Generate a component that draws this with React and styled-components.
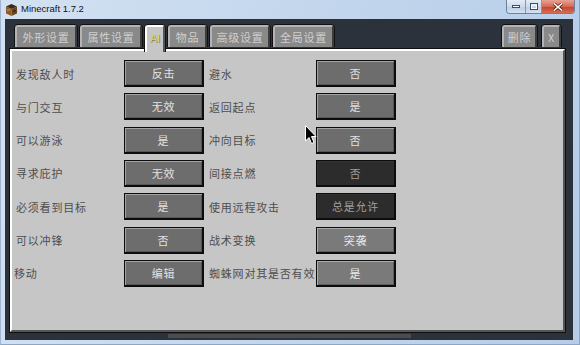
import React from "react";
import styled, { createGlobalStyle, css } from "styled-components";

const GlobalStyle = createGlobalStyle`
  html, body { margin: 0; padding: 0; background: #bcd0e8; }
  body { width: 580px; height: 345px; overflow: hidden; }
  * { box-sizing: border-box; }
`;

const CJK = `"Noto Sans CJK SC", "Noto Sans", sans-serif`;

const Window = styled.div`
  position: relative;
  width: 580px;
  height: 345px;
  display: flex;
  flex-direction: column;
  background: linear-gradient(100deg, #d3e2f2 0%, #c4d7ed 45%, #b6cde8 100%);
  border-left: 1px solid #9fb5cf;
  border-right: 1px solid #8ea6c4;
  border-bottom: 1px solid #8ea6c4;
`;

const TitleBar = styled.div`
  height: 19px;
  display: flex;
  align-items: flex-start;
  flex-shrink: 0;
`;

const AppIcon = styled.svg`
  width: 11px;
  height: 12px;
  margin: 4px 0 0 5px;
`;

const Title = styled.span`
  margin: 3px 0 0 4px;
  font-family: "Liberation Sans", Arial, sans-serif;
  font-size: 9.5px;
  line-height: 12px;
  color: #111;
`;

const Controls = styled.div`
  margin-left: auto;
  margin-right: 4px;
  display: flex;
  height: 14px;
  border: 1px solid #6f829b;
  border-top: none;
  border-radius: 0 0 4px 4px;
  overflow: hidden;
`;

const CtrlButton = styled.div`
  width: ${(p) => p.$w}px;
  height: 100%;
  display: flex;
  align-items: center;
  justify-content: center;
  border-left: 1px solid #8296af;
  background: linear-gradient(#e4edf7, #cbdaec 50%, #bccee5 51%, #d2e0f1);
  &:first-child { border-left: none; }
  ${(p) =>
    p.$close &&
    css`
      background: linear-gradient(#e9a393, #d36a55 50%, #c2442c 51%, #d96a4f);
    `}
`;

const Client = styled.div`
  position: relative;
  flex: 1;
  margin: 0 6px 4px 4px;
  background: #2c323c;
  display: flex;
  flex-direction: column;
`;

const TabBar = styled.div`
  height: 30px;
  padding: 6px 12px 0 10px;
  display: flex;
  align-items: flex-end;
  gap: 3px;
  flex-shrink: 0;
`;

const Tab = styled.div`
  width: ${(p) => p.$w}px;
  height: 22px;
  margin-bottom: 2px;
  margin-left: ${(p) => p.$gap || 0}px;
  display: flex;
  align-items: center;
  justify-content: center;
  font-family: ${CJK};
  font-size: 11px;
  letter-spacing: 0.8px;
  color: #cfcfcf;
  background: #898989;
  border-top: 2px solid #b4b4b4;
  border-left: 2px solid #b4b4b4;
  border-right: 2px solid #3d3d3d;
  border-radius: 3px 3px 0 0;
  box-shadow: 1px 0 0 #111, -1px 0 0 #111, 0 -1px 0 #111;
  white-space: nowrap;
  ${(p) =>
    p.$active &&
    css`
      position: relative;
      z-index: 2;
      height: 27px;
      margin-bottom: -3px;
      padding-bottom: 2px;
      background: #c6c6c6;
      border-top-color: #fff;
      border-left-color: #fff;
      border-right-color: #555;
      color: #d6d26a;
      letter-spacing: 0;
      font-family: "DejaVu Sans", sans-serif;
      font-size: 10px;
      text-shadow: 1px 1px 0 #8c8a5a;
    `}
`;

const Spacer = styled.div`
  flex: 1;
`;

const Panel = styled.div`
  flex: 1;
  margin: 0 8px 0 5px;
  background: #c6c6c6;
  border-top: 2px solid #fff;
  border-left: 2px solid #fff;
  border-right: 2px solid #555;
  border-bottom: 2px solid #555;
  box-shadow: 0 0 0 1px #101010;
  padding: 9px 0 0 4px;
`;

const Grid = styled.div`
  display: grid;
  grid-template-columns: 108px 80px 112px 80px;
  grid-auto-rows: 27px;
  row-gap: 6.33px;
`;

const Label = styled.div`
  display: flex;
  align-items: center;
  padding-left: ${(p) => p.$indent || 0}px;
  margin-left: ${(p) => p.$pull || 0}px;
  font-family: ${CJK};
  font-size: 11px;
  letter-spacing: 0.8px;
  color: #4e4e4e;
  white-space: nowrap;
`;

const variants = {
  normal: css`
    background: #6d6d6d;
    color: #e2e2e2;
    box-shadow: inset 1px 1px 0 #a2a2a2, inset -1px -1px 0 #565656;
  `,
  light: css`
    background: #7a7a7a;
    color: #ececec;
    box-shadow: inset 1px 1px 0 #acacac, inset -1px -1px 0 #5e5e5e;
  `,
  dark: css`
    background: #2c2c2c;
    color: #a0a0a0;
    box-shadow: inset 1px 1px 0 #333;
  `,
};

const Button = styled.div`
  display: flex;
  align-items: center;
  justify-content: center;
  font-family: ${CJK};
  font-size: 11px;
  letter-spacing: 0.8px;
  border: 1px solid #0c0c0c;
  border-right-width: 2px;
  border-bottom-width: 2px;
  ${(p) => variants[p.$variant || "normal"]}
`;

const Hotbar = styled.div`
  height: 4px;
  width: 243px;
  margin: 2px 0 2px 163px;
  background: #4a4c50;
  flex-shrink: 0;
`;

const Cursor = styled.svg`
  position: absolute;
  left: 304px;
  top: 125px;
  width: 12px;
  height: 20px;
  z-index: 5;
`;

const rows = [
  ["发现敌人时", "反击", "避水", "否"],
  ["与门交互", "无效", "返回起点", "是"],
  ["可以游泳", "是", "冲向目标", "否"],
  ["寻求庇护", "无效", "间接点燃", "否", "dark"],
  ["必须看到目标", "是", "使用远程攻击", "总是允许", "dark"],
  ["可以冲锋", "否", "战术变换", "突袭", "light"],
  ["移动", "编辑", "蜘蛛网对其是否有效", "是", "light"],
];

const leftTabs = [
  ["外形设置", 62],
  ["属性设置", 62],
  ["AI", 20, true],
  ["物品", 39],
  ["高级设置", 60],
  ["全局设置", 61],
];

export default function App() {
  return (
    <>
      <GlobalStyle />
      <Window>
        <TitleBar>
          <AppIcon viewBox="0 0 11 12">
            <polygon points="5.5,0 11,2.5 5.5,5 0,2.5" fill="#3b2a18" />
            <polygon points="0,2.5 5.5,5 5.5,12 0,9.5" fill="#8a5a2c" />
            <polygon points="5.5,5 11,2.5 11,9.5 5.5,12" fill="#6b4420" />
            <rect x="1" y="5" width="3" height="2" fill="#b07a40" />
            <rect x="7" y="6" width="3" height="2" fill="#4e3016" />
          </AppIcon>
          <Title>Minecraft 1.7.2</Title>
          <Controls>
            <CtrlButton $w={18}>
              <svg width="8" height="3" viewBox="0 0 8 3">
                <rect x="0.5" y="0.5" width="7" height="2" fill="#fff" stroke="#3c4d63" strokeWidth="1" />
              </svg>
            </CtrlButton>
            <CtrlButton $w={16}>
              <svg width="8" height="7" viewBox="0 0 8 7">
                <rect x="0.5" y="0.5" width="7" height="6" fill="none" stroke="#3c4d63" strokeWidth="1" />
                <rect x="1.5" y="2" width="5" height="3.5" fill="none" stroke="#fff" strokeWidth="1" />
              </svg>
            </CtrlButton>
            <CtrlButton $w={33} $close>
              <svg width="10" height="8" viewBox="0 0 10 8">
                <path d="M1 0.5 L9 7.5 M9 0.5 L1 7.5" stroke="#5a1c10" strokeWidth="3" />
                <path d="M1 0.5 L9 7.5 M9 0.5 L1 7.5" stroke="#fff" strokeWidth="1.6" />
              </svg>
            </CtrlButton>
          </Controls>
        </TitleBar>
        <Client>
          <TabBar>
            {leftTabs.map(([t, w, active]) => (
              <Tab key={t} $w={w} $active={active}>
                {t}
              </Tab>
            ))}
            <Spacer />
            <Tab $w={35}>删除</Tab>
            <Tab $w={19} $gap={2}>
              X
            </Tab>
          </TabBar>
          <Panel>
            <Grid>
              {rows.map(([l1, b1, l2, b2, v2], i) => (
                <React.Fragment key={l1}>
                  <Label $pull={i === 6 ? -2 : 0}>{l1}</Label>
                  <Button>{b1}</Button>
                  <Label $indent={5}>{l2}</Label>
                  <Button $variant={v2}>{b2}</Button>
                </React.Fragment>
              ))}
            </Grid>
          </Panel>
          <Hotbar />
        </Client>
        <Cursor viewBox="0 0 12 20">
          <path
            d="M0.5 0.5 L0.5 16 L4 12.5 L6.5 18.5 L9 17.5 L6.5 11.5 L11 11.5 Z"
            fill="#000"
            stroke="#fff"
            strokeWidth="1"
            strokeLinejoin="round"
          />
        </Cursor>
      </Window>
    </>
  );
}
